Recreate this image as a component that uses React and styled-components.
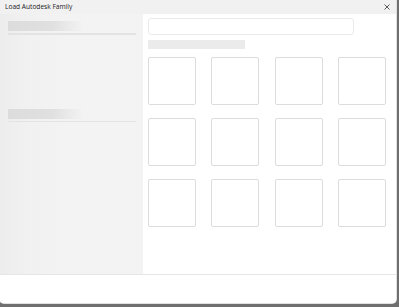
import React from 'react'
import styled, { createGlobalStyle } from 'styled-components'

const Global = createGlobalStyle`
  html, body {
    margin: 0;
    padding: 0;
    width: 399px;
    height: 307px;
    overflow: hidden;
    background: #6f6f6f;
    font-family: "Segoe UI", "Open Sans", "Liberation Sans", sans-serif;
  }
`

const Dialog = styled.div`
  width: 396px;
  height: 303px;
  display: flex;
  flex-direction: column;
  background: #ffffff;
  border-radius: 0 0 4px 4px;
  overflow: hidden;
  box-shadow: 0 0 0 1px #e0e0e0;
`

const TitleBar = styled.div`
  height: 14px;
  flex: none;
  display: flex;
  align-items: center;
  justify-content: space-between;
  padding: 0 5px 0 5px;
  background: #f1f1f1;
`

const Title = styled.span`
  font-size: 6.6px;
  color: #1a1a1a;
  line-height: 1;
  margin-top: 1.5px;
`

const Close = styled.button`
  width: 8px;
  height: 8px;
  padding: 0;
  border: none;
  background: none;
  display: flex;
  align-items: center;
  justify-content: center;
  margin-top: 0;
`

const Main = styled.div`
  flex: 1;
  display: flex;
  min-height: 0;
`

const Sidebar = styled.aside`
  width: 143px;
  flex: none;
  padding: 7px 8px 0 8px;
  box-sizing: border-box;
  background: linear-gradient(90deg, #ededed 0%, #f1f1f1 20%, #f3f3f3 45%, #f3f3f3 100%);
  display: flex;
  flex-direction: column;
`

const Section = styled.div`
  margin-top: ${p => p.offset}px;
  display: flex;
  flex-direction: column;
  gap: 2px;
`

const SkeletonBar = styled.div`
  width: 74px;
  height: 10px;
  background: linear-gradient(90deg, #dcdcdc 0%, #e0e0e0 60%, #f2f2f2 100%);
`

const Rule = styled.div`
  width: 128px;
  height: 1.5px;
  background: #e3e3e3;
`

const Content = styled.section`
  flex: 1;
  padding: 4px 0 0 5px;
  display: flex;
  flex-direction: column;
`

const Search = styled.div`
  width: 206px;
  height: 17px;
  box-sizing: border-box;
  border: 1px solid #ebebeb;
  border-radius: 3px;
  background: #fff;
`

const Label = styled.div`
  width: 97px;
  height: 9px;
  margin-top: 5px;
  background: #ebebeb;
`

const Grid = styled.div`
  margin-top: 7.5px;
  width: 238px;
  display: grid;
  grid-template-columns: repeat(4, 48px);
  justify-content: space-between;
  row-gap: 13px;
`

const Tile = styled.div`
  width: 48px;
  height: 48px;
  box-sizing: border-box;
  border: 1px solid #dcdcdc;
  border-radius: 2px;
  background: #fff;
`

const Footer = styled.div`
  height: 28px;
  flex: none;
  border-top: 1px solid #e6e6e6;
  background: #fff;
`

const App = () => {
  return (
    <>
      <Global />
      <Dialog>
        <TitleBar>
          <Title>Load Autodesk Family</Title>
          <Close aria-label="Close">
            <svg width="6" height="6" viewBox="0 0 6 6">
              <path d="M0.5 0.5 L5.5 5.5 M5.5 0.5 L0.5 5.5" stroke="#333" strokeWidth="0.8" />
            </svg>
          </Close>
        </TitleBar>
        <Main>
          <Sidebar>
            <Section offset={0}>
              <SkeletonBar />
              <Rule />
            </Section>
            <Section offset={74}>
              <SkeletonBar />
              <Rule />
            </Section>
          </Sidebar>
          <Content>
            <Search />
            <Label />
            <Grid>
              {Array.from({ length: 12 }).map((_, i) => (
                <Tile key={i} />
              ))}
            </Grid>
          </Content>
        </Main>
        <Footer />
      </Dialog>
    </>
  )
}

export default App
